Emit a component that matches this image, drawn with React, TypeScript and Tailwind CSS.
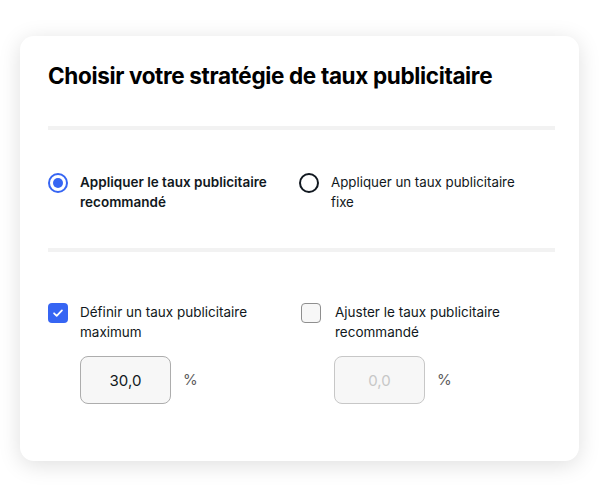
import React, { useState } from 'react';

function Radio({ checked }: { checked: boolean }) {
  return (
    <span
      className={`flex h-[20px] w-[20px] shrink-0 items-center justify-center rounded-full border-2 ${
        checked ? 'border-[#3665f3]' : 'border-[#111820]'
      }`}
    >
      {checked && <span className="h-[10px] w-[10px] rounded-full bg-[#3665f3]" />}
    </span>
  );
}

function Checkbox({ checked }: { checked: boolean }) {
  if (checked) {
    return (
      <span className="flex h-[20px] w-[20px] shrink-0 items-center justify-center rounded-[4px] bg-[#3665f3]">
        <svg viewBox="0 0 16 16" className="h-[14px] w-[14px]" fill="none">
          <path d="M3.5 8.3l3 3 6-6.3" stroke="white" strokeWidth="2" strokeLinecap="round" strokeLinejoin="round" />
        </svg>
      </span>
    );
  }
  return <span className="block h-[20px] w-[20px] shrink-0 rounded-[4px] border border-[#8f8f8f] bg-[#f7f7f7]" />;
}

export default function App() {
  const [strategy, setStrategy] = useState<'reco' | 'fixe'>('reco');
  const [maxOn, setMaxOn] = useState(true);
  const [adjustOn, setAdjustOn] = useState(false);

  return (
    <div
      className="min-h-[497px] w-[600px] bg-white pl-[20px] pt-[36px] text-[#111820]"
      style={{ fontFamily: 'Inter, "Noto Sans", sans-serif' }}
    >
      <div className="h-[425px] w-[559px] rounded-[14px] bg-white px-[28px] pt-[25px] shadow-[0_4px_22px_rgba(0,0,0,0.13)]">
        <h1 className="text-[22.5px] font-bold leading-[30px] tracking-[-0.35px] text-black">
          Choisir votre stratégie de taux publicitaire
        </h1>

        <div className="mt-[35px] h-[4px] w-[507px] bg-[#f2f2f2]" />

        <div className="mt-[42px] flex">
          <button
            type="button"
            onClick={() => setStrategy('reco')}
            className="flex w-[251px] items-start gap-[12px] text-left"
          >
            <span className="pt-[1px]">
              <Radio checked={strategy === 'reco'} />
            </span>
            <span
              className={`text-[13.5px] leading-[20px] ${strategy === 'reco' ? 'font-semibold' : ''}`}
            >
              Appliquer le taux publicitaire
              <br />
              recommandé
            </span>
          </button>
          <button
            type="button"
            onClick={() => setStrategy('fixe')}
            className="flex items-start gap-[12px] text-left"
          >
            <span className="pt-[1px]">
              <Radio checked={strategy === 'fixe'} />
            </span>
            <span className={`text-[13.3px] leading-[20px] ${strategy === 'fixe' ? 'font-semibold' : ''}`}>
              Appliquer un taux publicitaire
              <br />
              fixe
            </span>
          </button>
        </div>

        <div className="mt-[36px] h-[4px] w-[507px] bg-[#f2f2f2]" />

        <div className="mt-[50px] flex">
          <div className="w-[253px]">
            <button
              type="button"
              onClick={() => setMaxOn(!maxOn)}
              className="flex items-start gap-[12px] text-left"
            >
              <span className="pt-[1px]">
                <Checkbox checked={maxOn} />
              </span>
              <span className="text-[13.5px] leading-[20px]">
                Définir un taux publicitaire
                <br />
                maximum
              </span>
            </button>
            <div className="mt-[14px] flex items-center gap-[12px] pl-[32px]">
              <input
                value="30,0"
                readOnly
                className="h-[48px] w-[91px] rounded-[8px] border border-[#adadad] bg-[#f7f7f7] text-center text-[15px] text-[#111820] outline-none"
              />
              <span className="text-[15px] text-[#5e5e5e]">%</span>
            </div>
          </div>
          <div>
            <button
              type="button"
              onClick={() => setAdjustOn(!adjustOn)}
              className="flex items-start gap-[14px] text-left"
            >
              <span className="pt-[1px]">
                <Checkbox checked={adjustOn} />
              </span>
              <span className="text-[13.5px] leading-[20px]">
                Ajuster le taux publicitaire
                <br />
                recommandé
              </span>
            </button>
            <div className="mt-[14px] flex items-center gap-[12px] pl-[33px]">
              <input
                value="0,0"
                readOnly
                disabled
                className="h-[48px] w-[91px] rounded-[8px] border border-[#c7c7c7] bg-[#f7f7f7] text-center text-[15px] text-[#c7c7c7] outline-none"
              />
              <span className="text-[15px] text-[#5e5e5e]">%</span>
            </div>
          </div>
        </div>
      </div>
    </div>
  );
}
